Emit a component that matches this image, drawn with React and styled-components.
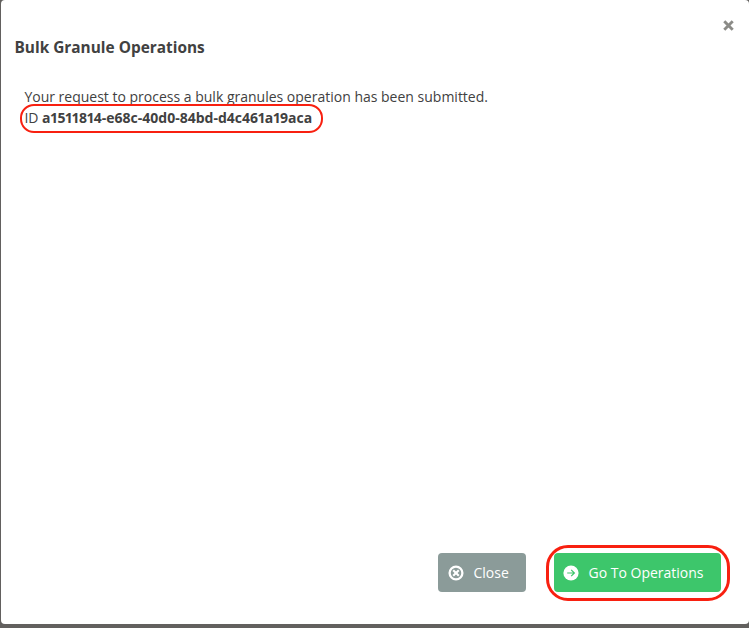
import React from "react";
import styled, { createGlobalStyle } from "styled-components";

const GlobalStyle = createGlobalStyle`
  * { box-sizing: border-box; }
  body {
    margin: 0;
    background: #62605e;
    font-family: "Open Sans", "Noto Sans", sans-serif;
    color: #414141;
  }
`;

const Backdrop = styled.div`
  height: 628px;
  padding: 0 0 4px 1px;
  overflow: hidden;
`;

const Dialog = styled.section`
  display: flex;
  flex-direction: column;
  height: 624px;
  background: #fff;
  border-radius: 4px;
`;

const Header = styled.header`
  display: flex;
  justify-content: space-between;
  align-items: flex-start;
  height: 86px;
  padding: 20px 15px 0 13.5px;
`;

const Title = styled.h2`
  margin: 17px 0 0;
  font-size: 15.4px;
  line-height: 22px;
  font-weight: 700;
  white-space: nowrap;
`;

const DismissButton = styled.button`
  display: flex;
  padding: 0;
  border: 0;
  background: none;
`;

const Body = styled.div`
  flex: 1;
  padding: 0 23.4px;
  font-size: 14px;
  line-height: 21px;
`;

const Message = styled.p`
  margin: 0;
  white-space: nowrap;
`;

const OperationId = styled.strong`
  font-weight: 700;
`;

/* The digit 1 sits in a wide tabular cell; trim both of its sides. */
const NarrowDigit = styled.span`
  margin: 0 -0.62px;
`;

const Highlighted = styled.div`
  position: relative;
  width: ${(p) => p.$width};
`;

const Callout = styled.span`
  position: absolute;
  inset: ${(p) => p.$inset};
  border: ${(p) => p.$stroke} solid #f82010;
  border-radius: ${(p) => p.$radius};
  pointer-events: none;
`;

const Footer = styled.footer`
  display: flex;
  justify-content: flex-end;
  gap: 28px;
  padding: 0 28px 32px;
`;

const Button = styled.button`
  display: flex;
  align-items: center;
  gap: ${(p) => p.$gap};
  width: ${(p) => p.$width};
  height: 39px;
  padding: 0 0 0 ${(p) => p.$indent};
  border: 0;
  border-radius: 4px;
  background: ${(p) => p.$color};
  color: #fff;
  font: 400 14px/20px "Open Sans", sans-serif;
  white-space: nowrap;
`;

const DismissIcon = () => (
  <svg width="11" height="11" viewBox="0 0 11 11">
    <path d="M2.3 2.3 8.7 8.7M8.7 2.3 2.3 8.7" stroke="#8b8b87" strokeWidth="2.9" strokeLinecap="square" />
  </svg>
);

const CloseIcon = () => (
  <svg width="16" height="16" viewBox="0 0 16 16" fill="none" stroke="#fff">
    <circle cx="8" cy="8" r="6.4" strokeWidth="2.3" />
    <path d="m5.2 5.2 5.6 5.6m0-5.6-5.6 5.6" strokeWidth="2.1" />
  </svg>
);

const ArrowIcon = () => (
  <svg width="16" height="16" viewBox="0 0 16 16" fill="none">
    <circle cx="8" cy="8" r="7.6" fill="#fff" />
    <path d="M4.2 8h7.2M8.2 4.8 11.4 8l-3.2 3.2" stroke="#3dc66b" strokeWidth="1.2" />
  </svg>
);

const operationId = "a1511814-e68c-40d0-84bd-d4c461a19aca";

export default function App() {
  return (
    <>
      <GlobalStyle />
      <Backdrop>
        <Dialog role="dialog" aria-labelledby="dialog-title">
          <Header>
            <Title id="dialog-title">Bulk Granule Operations</Title>
            <DismissButton aria-label="Dismiss"><DismissIcon /></DismissButton>
          </Header>
          <Body>
            <Message>Your request to process a bulk granules operation has been submitted.</Message>
            <Highlighted $width="287px">
              <Message>
                ID{" "}
                <OperationId>
                  {operationId.split(/(1)/).map((part, i) =>
                    part === "1" ? <NarrowDigit key={i}>1</NarrowDigit> : part
                  )}
                </OperationId>
              </Message>
              <Callout $inset="-3px -12px -5px -4.4px" $stroke="2px" $radius="14px" />
            </Highlighted>
          </Body>
          <Footer>
            <Button $width="88px" $color="#8b9b99" $indent="10px" $gap="9.5px"><CloseIcon />Close</Button>
            <Highlighted $width="167px">
              <Button $width="167px" $color="#3dc66b" $indent="9px" $gap="9.5px"><ArrowIcon />Go To Operations</Button>
              <Callout $inset="-8.5px" $stroke="3px" $radius="22px" />
            </Highlighted>
          </Footer>
        </Dialog>
      </Backdrop>
    </>
  );
}
